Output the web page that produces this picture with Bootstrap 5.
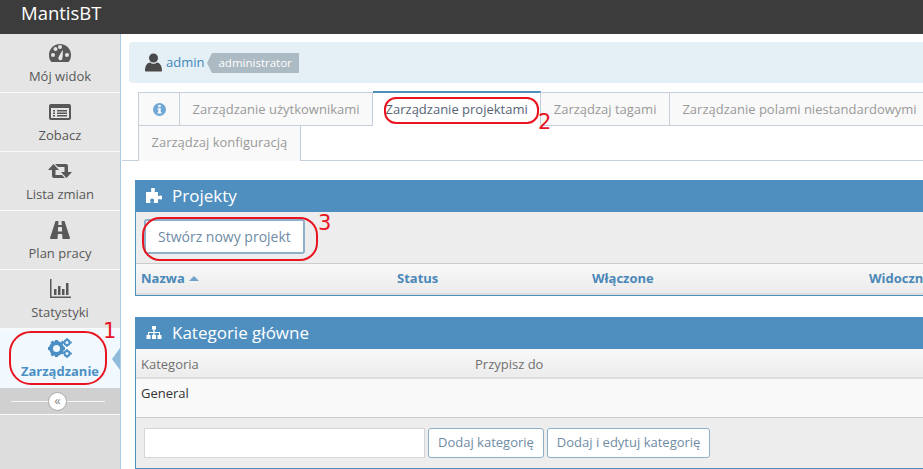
<!DOCTYPE html>
<html lang="pl">
<head>
<meta charset="utf-8">
<title>MantisBT</title>
<link href="https://cdn.jsdelivr.net/npm/bootstrap@5.3.0/dist/css/bootstrap.min.css" rel="stylesheet">
<style>
html,body{height:469px;overflow:hidden}
body{font-family:"Open Sans",sans-serif;font-size:13px;line-height:1.5;color:#393939;background:#fff;position:relative;width:923px}
.topbar{height:34px;background:#3c3c3c;color:#fff;font-size:18.5px;line-height:25px;padding:0 0 0 21px}
.shell{height:435px}
.sidebar{width:121px;flex:none;background:#dcdcdc;border-right:1px solid #a9cbe0}
.side-item{height:59px;background:#e5e5e5;border-bottom:1px solid #fafafa;color:#585858;text-align:center;padding-top:9px;line-height:18px;position:relative}
.side-item svg{display:block;margin:0 auto 4px;height:20px;width:24px;fill:#585858}
.side-item.on{background:#f1f9ff;color:#4b8fc5;font-weight:700;border-bottom:0;height:59px;padding-top:9px}
.side-item.on svg{fill:#4b8fc5}
.side-item.on::after{content:"";position:absolute;right:0;top:19px;border:solid transparent;border-width:11px 8px 11px 0;border-right-color:#8fbbdb}
.collapser{height:27px;background:#d0d0d0;border-bottom:1px solid #fafafa;position:relative}
.collapser::before{content:"";position:absolute;left:11px;right:15px;top:13px;height:1px;background:#f5f5f5}
.collapser span{position:absolute;left:48px;top:4px;width:19px;height:19px;border-radius:50%;background:#fff;border:1px solid #aaa;color:#8a8a8a;font-size:13px;line-height:14px;text-align:center}
.mainarea{flex:1;min-width:0;overflow:hidden;padding:8px 0 0 8px}
.crumbs{width:900px;height:41px;background:#e4eff6;border-radius:4px 0 0 4px;display:flex;align-items:center;padding:0 0 0 16px}
.crumbs svg{width:17px;height:19px;fill:#4a4a4a;margin-right:4px}
.crumbs a{color:#4287b7;text-decoration:none}
.rolebadge{background:#abbac3;color:#fff;font-size:11.5px;height:20px;line-height:20px;padding:0 7px 0 6px;margin-left:8px;position:relative}
.rolebadge::before{content:"";position:absolute;left:-5px;top:0;border:solid transparent;border-width:10px 5px 10px 0;border-right-color:#abbac3}
.tabarea{margin:9px 0 0 -7px;width:1000px;border-bottom:1px solid #c5d0dc;padding-left:16px;height:69px;display:flex;flex-wrap:wrap;align-content:flex-start}
.tabcell{height:34px;line-height:33px;background:#f9f9f9;border:1px solid #c5d0dc;border-left:0;border-top-width:1px;color:#999;padding:0 12.5px}
.tabcell:first-child,.tabcell.wrapstart{border-left:1px solid #c5d0dc}
.tabcell.first{width:42px;padding:0;text-align:center;border-left:1px solid #c5d0dc}
.tabcell.first svg{width:13px;height:13px;fill:#6fa8d6;vertical-align:-2px}
.tabcell.on{background:#fff;color:#576373;border-top:2px solid #4c8fbd;border-bottom-color:#fff;margin-top:-1px;height:35px;line-height:33px}
.tabcell.wrapstart{height:35px;border-top:0;border-bottom:0;line-height:32px}
.tabbreak{flex:0 0 100%;height:0}
.widgetbox{width:1000px;margin:19px 0 0 6px;border:1px solid #4f8fbf;background:#ededed}
.widgetbox.second{margin-top:21px}
.wtitle{height:32px;background:#4f8fbf;color:#fff;font-size:17px;line-height:32px;margin:-1px -1px 0;padding-left:11px;display:flex;align-items:center}
.wtitle svg{width:16px;height:16px;fill:#fff;margin-right:10px}
.toolrow{height:51px;padding:7px 0 0 8px;background:#ededed}
.plainbtn{display:inline-block;height:35px;border:2px solid #8fb0c9;border-radius:3px;background:#fff;color:#6f8ba5;font-size:14px;line-height:31px;padding:0 12px}
.headrow{display:flex;height:32px;background:linear-gradient(#f8f8f8,#ececec);border-top:1px solid #ccc;border-bottom:2px solid #ddd;line-height:29px;padding-left:5px}
.headrow b{color:#4b88b8;font-weight:700}
.headrow .c1{width:256px}.headrow .c2{width:195px}.headrow .c3{width:277px}
.caret-up{display:inline-block;border:solid transparent;border-width:0 5px 5px;border-bottom-color:#6fa3cc;vertical-align:2px;margin-left:1px}
.cathead{display:flex;height:30px;background:linear-gradient(#f8f8f8,#ececec);border-bottom:2px solid #ddd;line-height:30px;padding-left:5px;color:#707070}
.cathead span:first-child{width:334px}
.catrow{height:39px;background:#f9f9f9;border-bottom:1px solid #ccc;padding:5px 0 0 5px;color:#333}
.addrow{height:50px;background:#ededed;padding:10px 0 0 8px;display:flex;gap:3px}
.catinput{width:281px;height:30px;border:1px solid #d5d5d5;background:#fff}
.smallbtn{height:30px;border:1px solid #8fb0c9;border-radius:3px;background:#fff;color:#6f8ba5;line-height:27px;padding:0 9px}
.redlayer{position:absolute;left:0;top:0;pointer-events:none}
.redring{position:absolute;border:2px solid #e8141f}
.rednum{position:absolute;color:#e8141f;font-family:"DejaVu Sans",sans-serif;font-size:21px;line-height:24px}
</style>
</head>
<body>
<div class="topbar">MantisBT</div>
<div class="shell d-flex">
  <nav class="sidebar">
    <div class="side-item"><svg viewBox="0 0 24 20"><path fill-rule="evenodd" d="M12 1C5.5 1 1 6 1 12c0 2.500.6 4.600 1.800 6.300.3.400.7.700 1.200.7h16c.5 0 .9-.3 1.200-.7C22.400 16.600 23 14.500 23 12 23 6 18.500 1 12 1zM5 14a2 2 0 1 1 0-4 2 2 0 0 1 0 4zm2.500-6a2 2 0 1 1 0-4 2 2 0 0 1 0 4zM12 6a2 2 0 1 1 0-4 2 2 0 0 1 0 4zm2.200 10.300c-.6 1-1.900 1.300-2.900.7-1-.6-1.300-1.900-.7-2.900.3-.5 3.400-6.500 4.300-7.100.2 1-.4 8.800-.7 9.300zM19 14a2 2 0 1 1 0-4 2 2 0 0 1 0 4z"/></svg>Mój widok</div>
    <div class="side-item"><svg viewBox="0 0 24 20"><path fill-rule="evenodd" d="M3 2h18a2 2 0 0 1 2 2v12a2 2 0 0 1-2 2H3a2 2 0 0 1-2-2V4a2 2 0 0 1 2-2zm0 4v10h18V6H3zm2 2h2v1.500H5zm4 0h10v1.500H9zm-4 2.500h2V12H5zm4 0h10V12H9zM5 13h2v1.500H5zm4 0h10v1.500H9z"/></svg>Zobacz</div>
    <div class="side-item"><svg viewBox="0 0 24 20"><path d="M5.500 3l5.500 6H7.500v5H14l3 3H6a2 2 0 0 1-2-2V9H0l5.500-6zM18.500 17L13 11h3.500V6H10L7 3h11a2 2 0 0 1 2 2v6h4l-5.500 6z"/></svg>Lista zmian</div>
    <div class="side-item"><svg viewBox="0 0 24 20"><path d="M7.500 1h3l-.3 4h3.600l-.3-4h3l5.500 17a1 1 0 0 1-1 1H14.500l-.4-5H9.900l-.4 5H3a1 1 0 0 1-1-1zM10.100 7l-.2 4.500h4.200L13.900 7z"/></svg>Plan pracy</div>
    <div class="side-item"><svg viewBox="0 0 24 20"><path d="M2 0h1.500v17.500H23V19H2zM6 10h2.500v6H6zm4-3h2.500v9H10zm4 3h2.500v6H14zm4-6h2.500v12H18z"/></svg>Statystyki</div>
    <div class="side-item on"><svg viewBox="0 0 24 20"><circle cx="8.500" cy="10.500" r="5.500" fill="none" stroke="#4b8fc5" stroke-width="4"/><path d="M7 2h3v3H7zM7 16h3v3H7zM0 9h3v3H0zM14 9h3v3h-3z"/><path d="M2.500 4.500l2-2 2 2-2 2zM12.500 14.500l2-2 2 2-2 2zM2.500 16.500l2-2 2 2-2 2zM12.500 4.500l2-2 2 2-2 2z"/><circle cx="19" cy="4.500" r="2.500" fill="none" stroke="#4b8fc5" stroke-width="2"/><circle cx="19" cy="15.500" r="2.500" fill="none" stroke="#4b8fc5" stroke-width="2"/><path d="M18 .2h2v1.500h-2zM18 7.300h2v1.500h-2zM22 3.500h1.800v2H22zM18 11.200h2v1.500h-2zM18 18.300h2v1.500h-2zM22 14.500h1.800v2H22z"/></svg>Zarządzanie</div>
    <div class="collapser"><span>«</span></div>
  </nav>
  <main class="mainarea">
    <div class="crumbs"><svg viewBox="0 0 17 19"><circle cx="8.500" cy="5" r="4.500"/><path d="M1 18.500c-.6 0-1-.4-1-1C0 13 2 10 5 9.500c1 .9 2.200 1.300 3.500 1.300S11 10.400 12 9.500c3 .5 5 3.500 5 8 0 .6-.4 1-1 1z"/></svg><a href="#">admin</a><span class="rolebadge">administrator</span></div>
    <div class="tabarea">
      <div class="tabcell first"><svg viewBox="0 0 16 16"><path fill-rule="evenodd" d="M8 0a8 8 0 1 1 0 16A8 8 0 0 1 8 0zM6.500 2.500v2.700h3V2.500zM5.500 6.500V8h1v3.500h-1V13h5v-1.500h-1v-5z"/></svg></div>
      <div class="tabcell">Zarządzanie użytkownikami</div>
      <div class="tabcell on">Zarządzanie projektami</div>
      <div class="tabcell">Zarządzaj tagami</div>
      <div class="tabcell">Zarządzanie polami niestandardowymi</div>
      <div class="tabbreak"></div>
      <div class="tabcell wrapstart">Zarządzaj konfiguracją</div>
    </div>
    <section class="widgetbox">
      <div class="wtitle"><svg viewBox="0 0 16 16"><path d="M5 1.500a2 2 0 0 1 4 0c0 .8-.6 1.200-.6 1.800 0 .4.400.7 1 .7H12v3.200c0 .6.300 1 .7 1 .6 0 1-.6 1.800-.6a2 2 0 0 1 0 4c-.8 0-1.200-.6-1.800-.6-.4 0-.7.400-.7 1V15H8.500c-.6 0-1-.3-1-.7 0-.6.600-1 .6-1.800a2 2 0 0 0-4 0c0 .8.600 1.200.6 1.800 0 .4-.4.700-1 .7H0V4h4.400c.6 0 1-.3 1-.7C5.400 2.700 5 2.300 5 1.500z"/></svg>Projekty</div>
      <div class="toolrow"><span class="plainbtn">Stwórz nowy projekt</span></div>
      <div class="headrow"><div class="c1"><b>Nazwa</b> <span class="caret-up"></span></div><div class="c2"><b>Status</b></div><div class="c3"><b>Włączone</b></div><div><b>Widoczność</b></div></div>
    </section>
    <section class="widgetbox second">
      <div class="wtitle"><svg viewBox="0 0 16 16"><path d="M6 1h4v3.500H8.700V7H14v3h1.500v4h-4v-4H13V8H8.700v2H10v4H6v-4h1.300V8H3v2h1.500v4h-4v-4H2V7h5.300V4.500H6z"/></svg>Kategorie główne</div>
      <div class="cathead"><span>Kategoria</span><span>Przypisz do</span></div>
      <div class="catrow">General</div>
      <div class="addrow"><input class="catinput" type="text" aria-label="Kategoria"><span class="smallbtn">Dodaj kategorię</span><span class="smallbtn">Dodaj i edytuj kategorię</span></div>
    </section>
  </main>
</div>
<div class="redring" style="left:9px;top:331px;width:98px;height:54px;border-radius:22px"></div>
<div class="redring" style="left:384px;top:97px;width:155px;height:27px;border-radius:12px"></div>
<div class="redring" style="left:142px;top:217px;width:176px;height:44px;border-radius:18px"></div>
<span class="rednum" style="left:103px;top:319px">1</span>
<span class="rednum" style="left:538px;top:110px">2</span>
<span class="rednum" style="left:318px;top:211px">3</span>
</body>
</html>
